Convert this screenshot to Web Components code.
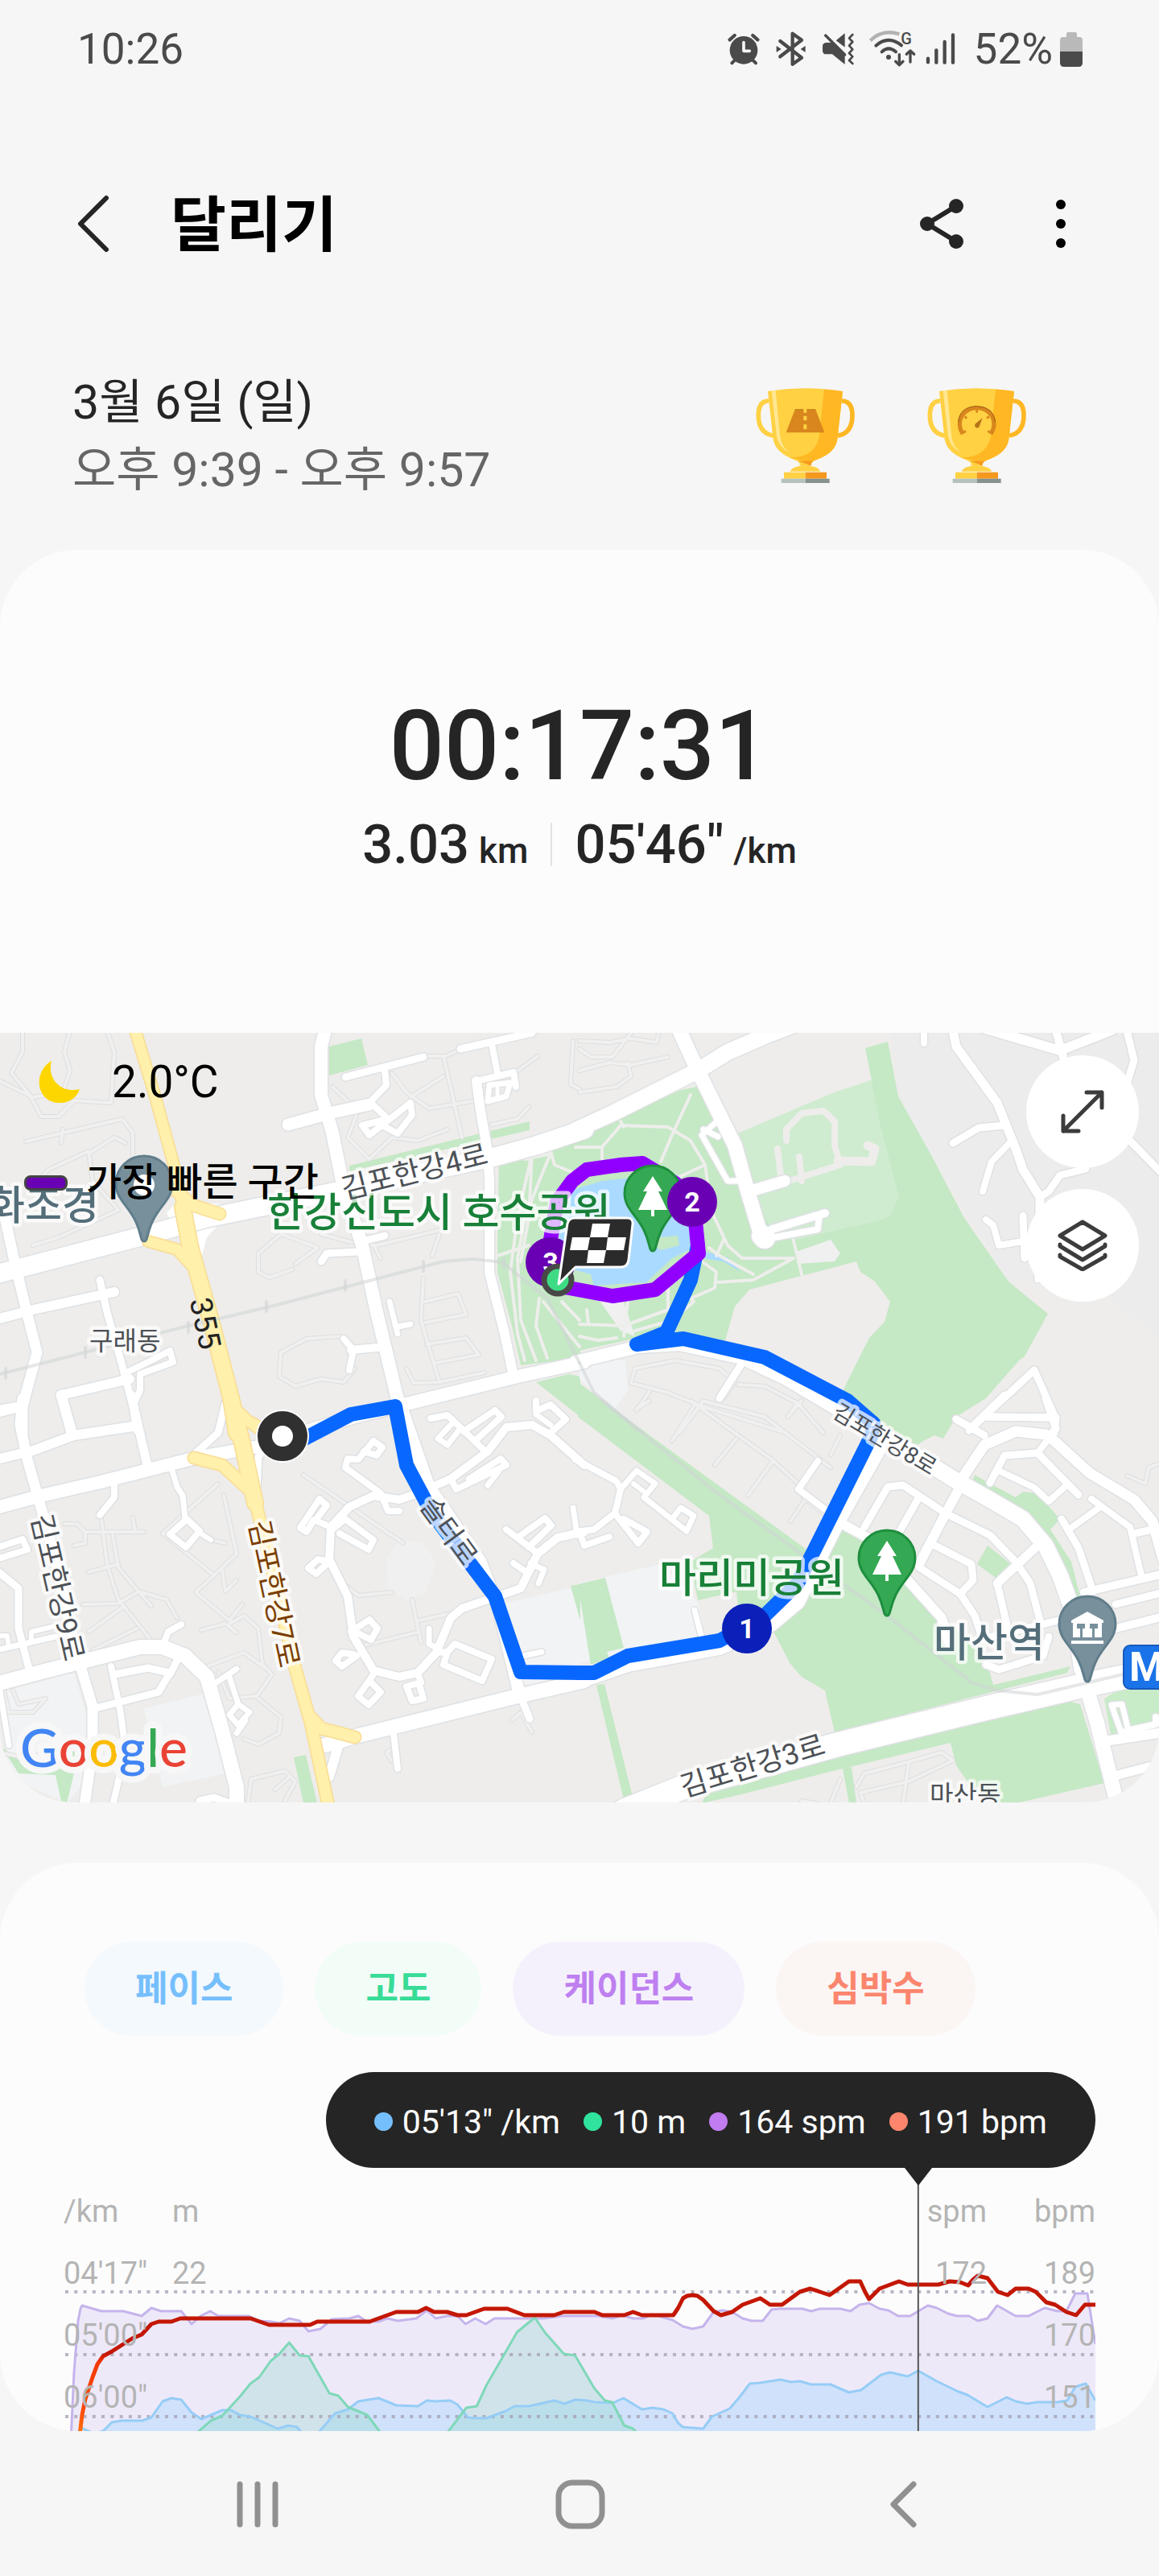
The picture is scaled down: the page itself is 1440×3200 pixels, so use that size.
<!DOCTYPE html>
<html lang="ko">
<head>
<meta charset="utf-8">
<meta name="viewport" content="width=device-width, initial-scale=1">
<title>달리기</title>
<style>
  body { margin: 0; background: #f6f6f6; color: #252525; font-family: Roboto, "Noto Sans CJK KR", sans-serif; }
</style>
</head>
<body>
<run-screen></run-screen>

<script>
const BASE = `<style>
  *, *::before, *::after { box-sizing: border-box; }
  :host { display: block; }
  svg { display: block; }
  p, h1, ul { margin: 0; padding: 0; }
  button { font: inherit; color: inherit; background: none; border: 0; padding: 0; margin: 0; display: grid; place-items: center; cursor: pointer; }
</style>`;

function component(name, render) {
  customElements.define(name, class extends HTMLElement {
    constructor() {
      super();
      const t = document.createElement('template');
      t.innerHTML = BASE + render(this);
      this.attachShadow({ mode: 'open' }).append(t.content.cloneNode(true));
    }
  });
}

/* Turns "x,y x,y" in sheet units into rounded pixel points. */
function project(sheet, pts) {
  return pts.trim().split(/\s+/).map(p => {
    const [x, y] = p.split(',').map(Number);
    return Math.round(sheet.x + x * sheet.sx) + ',' + Math.round(sheet.y + y / 3);
  }).join(' ');
}

/* ---------- status bar ---------- */
component('status-bar', () => `<style>
  :host { height: 122px; padding: 0 95px 0 96px; display: flex; align-items: center; justify-content: space-between; color: #4a4a4a; font-size: 53px; line-height: 60px; }
  .right { display: flex; align-items: center; }
  .right span { margin: 0 9px 0 22px; }
</style>
<span>10:26</span>
<div class="right">
  <svg width="284" height="48" viewBox="78 50 852 144" fill="none" stroke="#4a4a4a" stroke-width="9" stroke-linecap="round" stroke-linejoin="round">
    <circle cx="138" cy="126" r="52" fill="#4a4a4a" stroke="none"/>
    <path d="M86 87l18-16M190 87l-18-16" stroke-width="13"/><path d="M94 174l12-12M183 174l-12-12" stroke-width="12"/>
    <path d="M138 97v32h22" stroke="#f6f6f6" stroke-width="11"/>
    <path d="M274 92l80 62-34 24V64l34 24-80 62" stroke-width="13"/>
    <path d="M260 110v24l18-12zM368 110v24l-18-12z" fill="#4a4a4a" stroke="none"/>
    <path d="M482 90l33-27v52zM447 98h22l46 46v35l-47-38h-22q-14 0-14-14v-15q0-14 15-14z" fill="#4a4a4a" stroke="none"/>
    <path d="M443 71l72 72" stroke-width="10"/>
    <path d="M544 68l-13 13 13 14-13 14 13 14-13 14 13 13-13 14 13 12" stroke-width="8"/>
    <path d="M610 90q46-44 108-24" stroke="#b2b2b2" stroke-width="13" stroke-linecap="butt"/>
    <path d="M631 109q46-40 95-1M653 132q25-24 52 0" stroke-width="12"/>
    <circle cx="678" cy="152" r="9" fill="#4a4a4a" stroke="none"/>
    <path d="M718 142v38M704 168l14 13 14-13M759 170v-41M745 141l14-13 14 13" stroke-width="10"/>
    <text x="724" y="105" font-family="Roboto" font-size="60" font-weight="500" fill="#4a4a4a" stroke="none">G</text>
    <path d="M825 157v14M856 126v46M887 95v77M918 69v103" stroke-width="13"/>
  </svg>
  <span>52%</span>
  <svg width="28" height="43" viewBox="0 0 28 43"><path d="M8 6V2q0-2 2-2h9q2 0 2 2v4h3q4 0 4 4v14H0V10q0-4 4-4z" fill="#b9b9b9"/><path d="M0 24h28v14q0 5-5 5H5q-5 0-5-5z" fill="#4a4a4a"/></svg>
</div>`);

/* ---------- title bar ---------- */
component('title-bar', () => `<style>
  :host { height: 316px; padding: 0 84px 0 76px; display: flex; align-items: center; }
  h1 { flex: 1; margin-left: 56px; font-size: 75px; line-height: 96px; font-weight: 700; color: #000; }
  button { height: 96px; padding-bottom: 4px; }
  .back { width: 80px; }
  .share { width: 96px; }
  .more { width: 76px; margin-left: 62px; }
</style>
<button class="back" aria-label="뒤로"><svg width="44" height="72" viewBox="0 0 44 72" fill="none" stroke="#252525" stroke-width="6" stroke-linecap="round" stroke-linejoin="round"><path d="M38 4L6 36l32 32"/></svg></button>
<h1><slot></slot></h1>
<button class="share" aria-label="공유"><svg width="56" height="64" viewBox="0 0 56 64" fill="#252525"><path d="M46 10L10 32l36 22" fill="none" stroke="#252525" stroke-width="6"/><circle cx="46" cy="10" r="9"/><circle cx="10" cy="32" r="9"/><circle cx="46" cy="54" r="9"/></svg></button>
<button class="more" aria-label="더보기"><svg width="12" height="60" viewBox="0 0 12 60"><circle cx="6" cy="6" r="6"/><circle cx="6" cy="30" r="6"/><circle cx="6" cy="54" r="6"/></svg></button>`);

/* ---------- date and awards ---------- */
const trophy = badge => `<svg width="124" height="120" viewBox="117 62 372 360">
  <path d="M166 110q-39 0-39 54 0 66 56 76" fill="none" stroke="#ffd143" stroke-width="17"/>
  <path d="M437 110q40 0 40 54 0 66-54 76" fill="none" stroke="#ffb723" stroke-width="17"/>
  <path d="M162 74q139-22 279 0l-20 180q-8 50-75 74-30 12-20 23H279q9-12-21-23-66-24-76-74z" fill="#ffd143"/>
  <path d="M372 67q40 2 69 8l-20 179q-8 50-75 74-22 8-22 15-15-8-82-22 98 0 112-80z" fill="#ffb723"/>
  <path d="M274 334h56q-8 9-8 18-20-10-48-18z" fill="#f59a1c"/>
  <path d="M176 72l15-2 17 175q5 34 34 58-37-18-47-60z" fill="#ffe791"/>
  <path d="M245 373q6-15 35-20 20-8 43 0 30 5 34 20z" fill="#ffd143"/>
  <path d="M222 376h80v24h-80z" fill="#ffd143"/><path d="M302 376h79v24h-79z" fill="#f5991e"/>
  <path d="M212 400h90v16h-90z" fill="#b6c1bf"/><path d="M302 400h90v16h-90z" fill="#869190"/>
  ${badge}</svg>`;
const road = `<path d="M263 142h77l33 86H230z" fill="#d8861d"/><path d="M263 142h77" stroke="#a9620f" stroke-width="2"/><path d="M301 140v14M301 166v17M301 198v18" stroke="#ffd143" stroke-width="12"/>`;
const gauge = `<path d="M250 233q-22-32-4-67 20-30 56-30t56 30q18 35-4 67" fill="none" stroke="#d8861d" stroke-width="15"/><path d="M233 190q4-58 69-60 64 2 69 60" fill="none" stroke="#9c5d14" stroke-width="3"/><path d="M302 136v18M256 168l9 7M348 168l-9 7M250 230l11-8M354 230l-11-8" stroke="#d8861d" stroke-width="8"/><path d="M323 174l-12 32q-6 8-14 2-6-8 1-14z" fill="#b8721a"/>`;
component('session-meta', () => `<style>
  :host { display: flex; align-items: center; justify-content: space-between; padding: 20px 164px 57px 90px; font-size: 59px; line-height: 84px; }
  .when p + p { color: #666; }
  .awards { display: flex; gap: 89px; }
</style>
<div class="when"><p>3월 6일 (일)</p><p>오후 9:39 - 오후 9:57</p></div>
<div class="awards">${trophy(road)}${trophy(gauge)}</div>`);

/* ---------- totals ---------- */
component('run-summary', () => `<style>
  :host { background: #fcfcfc; border-radius: 96px 96px 0 0; padding: 174px 0 194px; text-align: center; font-weight: 500; }
  .time { font-size: 120px; line-height: 140px; }
  .row { display: flex; justify-content: center; align-items: baseline; margin-top: 12px; font-size: 67px; line-height: 80px; }
  .row small { font-size: 44px; line-height: 48px; margin-left: 12px; }
  .row i { align-self: center; width: 2px; height: 54px; background: #e2e2e2; margin: 0 28px; }
</style>
<p class="time">00:17:31</p>
<div class="row"><span>3.03</span><small>km</small><i></i><span>05'46"</span><small>/km</small></div>`);

/* ---------- map ---------- */
const U = 720 / 1568;
const SHEET = {
  nw: { x: 0, y: -3, sx: U }, ne: { x: 720, y: -3, sx: U },
  sw: { x: 0, y: 457, sx: U }, se: { x: 720, y: 457, sx: U }
};
const AREAS = [
  ['ne', '#ececec', '840,0 1568,0 1568,1150 1400,950 1240,930 1160,935 950,460 862,245'],
  ['nw', '#c5e8c5', '890,60 978,30 996,130 890,168'],
  ['nw', '#c5e8c5', '945,505 1433,340 1433,372 945,525'],
  ['nw', '#c5e8c5', '1350,480 1568,405 1570,1222 1410,1248 1385,1100 1345,900 1345,800'],
  ['nw', '#c5e8c5', '1450,1310 1540,1280 1570,1290 1570,1440'],
  ['ne', '#c5e8c5', '-5,395 275,222 350,200 430,385 690,232 790,185 773,65 835,42 862,245 950,460 1040,700 1160,935 1267,1055 1205,1215 1190,1230 1100,1370 1020,1440 985,1520 960,1510 930,1530 900,1560 700,1380 785,1145 825,1085 840,1010 800,935 760,900 750,862 460,965 420,1030 395,1155 160,1145 -5,1195'],
  ['ne', '#cfebd0', '430,385 690,232 790,185 810,330 865,620 840,690 820,705 590,780 520,745 460,590'],
  ['ne', '#c5e8c5', '-5,1310 180,1500 60,1500 -5,1440'],
  ['ne', '#f1f3f5', '0,1215 125,1230 130,1340 95,1410 0,1300'],
  ['sw', '#f1f3f5', '20,1080 200,1015 240,1200 240,1400 180,1500 20,1400'],
  ['sw', '#f1f3f5', '390,1145 570,1085 620,1385 440,1440'],
  ['sw', '#f1f3f5', '1350,760 1550,695 1570,830 1570,1050 1400,1060'],
  ['se', '#f1f3f5', '-5,680 220,610 320,750 340,870 -5,980'],
  ['sw', '#c5e8c5', '1545,690 1570,685 1570,820'],
  ['sw', '#c5e8c5', '795,1330 828,1320 858,1500 822,1500'],
  ['sw', '#c5e8c5', '5,1290 60,1350 215,1300 180,1500 165,1490 150,1395 50,1390'],
  ['se', '#c5e8c5', '-5,60 -5,-60 60,0 620,560 705,470 770,510 980,800 1100,960 1120,1060 1328,990 1320,1015 690,1235 665,1080 600,1030 570,980 520,850 560,780 430,770 425,710 320,745 300,600 362,550 350,430'],
  ['se', '#c5e8c5', '-5,685 70,660 120,920 75,935 80,960 30,985'],
  ['se', '#c5e8c5', '45,1060 68,1055 148,1500 122,1500'],
  ['se', '#c5e8c5', '350,1450 1320,1120 1355,1130 1420,1425 1180,1500 1140,1500 1060,1440 1020,1360 1005,1275 712,1370 430,1470 330,1500'],
  ['se', '#c5e8c5', '712,1370 735,1365 750,1500 730,1500'],
  ['se', '#c8ebc8', '1420,1110 1480,1060 1570,1050 1570,1240 1440,1260'],
  ['se', '#c5e8c5', '1070,275 1110,310 1180,360 1200,340 1240,345 1300,440 1275,480 1330,600 1355,730 1330,740 1300,600 1240,470 1150,380 1060,310'],
  ['se', '#c5e8c5', '1105,540 1165,605 1125,660 1075,610'],
  ['ne', '#f0f0f0', '50,1000 120,1010 150,1140 110,1120'],
  ['ne', '#f0f0f0', '585,825 680,780 705,830 690,860 590,870'],
  ['ne', '#aadaff', '-60,640 -10,590 60,560 160,545 290,600 310,810 250,850 180,940 40,950 30,910 -50,880'],
  ['ne', '#aadaff', '340,825 400,845 435,900 390,862 330,850'],
  ['ne', '#c5e8c5', '215,770 265,765 270,800 220,820 200,800'],
  ['nw', '#ffffff', '450,680 480,640 640,650 560,770 540,870 500,800'],
  ['sw', '#f0f0f0', '1045,590 1080,520 1140,525 1180,600 1150,720 1100,745 1050,700']
];
/* Footpaths and service lanes. */
const LANES = [
  ['nw', '60,0 60,80 30,160 80,240 110,320 160,320 200,260 300,270 310,80 290,0'],
  ['nw', '190,0 175,80 190,150 170,230 90,250 0,190'],
  ['nw', '70,415 330,330 360,380 360,480'], ['nw', '170,370 165,420'],
  ['nw', '90,800 160,770 320,670 250,560 240,450 130,520 80,600'], ['nw', '240,460 310,400 340,420'],
  ['nw', '1150,95 1200,95 1250,400'], ['nw', '900,210 970,300 940,400 1000,480 1060,400 1130,410 1210,370'],
  ['nw', '1060,160 1100,230 1160,290 1290,260'], ['nw', '1200,170 1110,250'], ['nw', '1200,100 1250,70'],
  ['nw', '1330,350 1400,330 1430,285'], ['nw', '1380,170 1455,95'],
  ['nw', '760,760 700,830 700,900 730,920 790,890'], ['nw', '760,760 860,810 800,870'],
  ['nw', '870,760 950,790 1020,800 1200,740'], ['nw', '1190,760 1170,840'], ['nw', '1010,800 1030,850'],
  ['nw', '1145,925 1140,1080 1190,1310 1310,1275'], ['nw', '1150,1010 1240,980 1260,1060 1150,1090'],
  ['nw', '1155,1170 1260,1145 1295,1210 1180,1240'], ['nw', '1100,1260 1120,1315 1190,1310'],
  ['nw', '920,1140 830,1150 760,1200 755,1290 800,1325 870,1300 930,1310 960,1260'],
  ['nw', '1550,40 1545,200 1568,220'],
  ['ne', '0,40 80,45 140,30 210,45 215,0'], ['ne', '0,150 80,120 140,130 240,100'], ['ne', '0,70 30,100 90,100 140,10'],
  ['ne', '0,230 100,210 140,170 130,120'],
  ['ne', '140,1310 150,1260 260,1230 380,1260 420,1310 390,1370'], ['ne', '140,1315 240,1350 330,1400 560,1500'],
  ['ne', '190,1345 155,1415'], ['ne', '330,1390 270,1500'], ['ne', '430,1320 500,1325 590,1390 660,1500'], ['ne', '590,1390 565,1440'],
  ['se', '300,0 430,130 520,220 600,320'], ['se', '330,0 500,60 680,250'], ['se', '310,20 250,150'], ['se', '425,140 365,240'], ['se', '520,230 455,355'],
  ['se', '610,370 570,450'], ['se', '605,360 660,420'], ['se', '705,130 680,200'], ['se', '155,30 190,0'], ['se', '565,60 600,0'],
  ['se', '750,1440 770,1390 880,1350 980,1310 1010,1340 890,1420 760,1460 770,1500'], ['se', '890,1350 875,1500'],
  ['se', '680,1500 705,1410'], ['se', '600,1490 640,1500'], ['se', '1480,280 1530,310 1540,250 1568,235'],
  ['sw', '175,460 210,460 230,490 390,490'], ['sw', '360,435 365,485'], ['sw', '275,440 290,610 320,740 410,895'],
  ['sw', '305,500 320,620 375,710 450,740 480,810'], ['sw', '240,640 320,610'], ['sw', '225,760 320,755 375,710 410,765'],
  ['sw', '240,860 330,770'], ['sw', '250,930 370,850'], ['sw', '200,540 230,530 230,490'],
  ['sw', '590,310 440,495 580,650 640,570 605,350'], ['sw', '580,650 530,715 620,820 655,760'], ['sw', '545,855 610,830 640,865'],
  ['sw', '600,630 610,710 640,670'], ['sw', '620,830 660,800 700,850 710,980 735,1020 695,1100 620,1110 590,1010'],
  ['sw', '560,990 660,940 720,1000'], ['sw', '700,1110 760,1180 755,1240 700,1280 660,1260'],
  ['sw', '570,520 610,530'], ['sw', '820,275 1090,530'], ['sw', '930,680 970,725 1060,715'], ['sw', '1115,740 1140,900'], ['sw', '975,915 1135,860'], ['sw', '1135,820 1230,790'],
  ['sw', '670,1500 680,1410 770,1380 800,1420 770,1490'], ['sw', '785,1400 745,1450'], ['sw', '1385,1190 1410,1160 1440,1235'], ['sw', '1060,1300 1045,1310 1060,1345'],
  ['sw', '10,1080 25,1160 90,1160 125,1110 50,1130 35,1080'], ['sw', '0,1310 60,1330 200,1300']
];
const PARK_PATHS = [
  ['ne', '300,240 250,390 220,490'], ['ne', '-10,435 60,435 110,355 240,360 300,410 340,500 360,680 400,800 440,850 580,850 470,930 370,940'],
  ['ne', '340,500 270,545'], ['ne', '110,340 120,360'], ['ne', '60,435 60,490'], ['ne', '330,860 370,900 365,960 300,1000 310,1010 250,1080 150,1120'],
  ['ne', '575,760 600,910'], ['ne', '350,810 380,840 470,910'], ['ne', '390,780 370,840'], ['ne', '0,1095 120,1100 240,1040 240,960'], ['ne', '20,1040 25,1090'], ['ne', '130,1010 120,1140'], ['ne', '0,1140 50,1155 100,1145'],
  ['nw', '1370,490 1440,460 1400,700 1380,900 1400,1130 1420,1230'], ['nw', '1420,480 1490,460 1460,560 1420,700 1400,850 1410,1080 1450,1230'],
  ['nw', '1490,450 1500,500 1568,540'], ['nw', '1440,460 1430,700 1410,860'], ['nw', '1345,840 1430,800'], ['nw', '1460,1000 1450,1100 1480,1220'], ['nw', '1470,1010 1568,1180'], ['nw', '1520,1010 1568,1080']
];
/* Streets: sheet, width, points. */
const STREETS = [
  ['nw', 23, '-10,910 390,765 560,700 700,660 910,600 1340,470 1450,430 1580,370'], ['ne', 20, '-10,372 90,310 320,150 400,80 500,20 580,-20'],
  ['nw', 12, '-10,1078 90,1040 310,975'], ['nw', 13, '10,680 40,860 75,1060 100,1200 60,1400 60,1500'],
  ['nw', 9, '270,930 290,1050 330,1250 360,1400 370,1490'], ['nw', 12, '-10,1425 60,1400'], ['nw', 12, '350,1300 165,1360 195,1510'],
  ['nw', 8, '350,1270 410,1230 460,1195 468,1235 380,1280 380,1340 360,1400'],
  ['nw', 16, '880,0 870,60 870,240 900,380 930,590 980,800 1020,1050 1080,1400'],
  ['nw', 12, '1290,190 1300,300 1320,450 1325,560 1325,900 1365,1130 1390,1290'], ['nw', 8, '1330,50 1345,160'], ['nw', 9, '1245,68 1440,8'], ['nw', 9, '935,175 1145,100'],
  ['nw', 8, '1040,150 1045,205 1000,270'], ['nw', 15, '780,350 900,305 1000,275'], ['nw', 8, '1010,280 1050,330 980,355 1000,390 1110,270 1115,315 1075,385 1030,350'],
  ['nw', 8, '1290,190 1390,155 1397,210'], ['nw', 7, '1325,205 1320,265 1370,245 1380,195 1325,205'], ['nw', 5, '1345,215 1345,250'],
  ['nw', 9, '870,860 885,830 970,825'], ['nw', 9, '980,785 1040,765'], ['nw', 7, '1055,1010 1075,1130'], ['nw', 7, '1075,1105 1110,1095'],
  ['nw', 8, '930,1150 955,1190 945,1265'], ['nw', 10, '950,1190 1040,1180'], ['nw', 16, '1090,1395 1400,1290 1580,1236'],
  ['ne', 16, '-10,1236 160,1180 270,1170 440,1220 560,1300 720,1430'],
  ['ne', 18, '270,0 320,150 420,430 455,600 490,760'], ['ne', 26, '495,765 500,775'], ['ne', 14, '460,600 555,562'], ['ne', 10, '520,740 665,680'], ['ne', 8, '530,770 645,740 650,690'],
  ['ne', 7, '375,335 330,390 400,562 440,562'], ['ne', 7, '335,370 375,395'], ['ne', 9, '380,1370 445,1230'],
  ['ne', 11, '1010,0 1020,60 1130,270 1180,440 1200,520 1245,620 1245,690'], ['ne', 12, '1090,-10 1300,75 1440,0'], ['ne', 10, '1290,0 1310,110'], ['ne', 9, '1480,0 1500,110 1480,200'],
  ['ne', 9, '1480,400 1580,540'], ['ne', 9, '1150,355 1080,362 1010,420'], ['ne', 8, '1170,410 1115,490 1090,600'], ['ne', 9, '1245,620 1270,600 1300,540 1370,515'],
  ['ne', 8, '932,0 932,48'], ['ne', 8, '1100,705 1120,725 1135,800 1200,785'], ['ne', 9, '1200,690 1205,850'], ['ne', 7, '1240,930 1240,900'],
  ['ne', 9, '1020,1450 1095,1510'], ['ne', 9, '1055,1490 1230,1265 1290,1450 1285,1500'], ['ne', 9, '1100,1440 1290,1442'],
  ['sw', 13, '60,-10 55,90 75,220 110,400 150,600 200,900 220,1000 250,1140 250,1300 228,1510'],
  ['sw', 11, '355,-20 375,100 398,240'], ['sw', 13, '-10,40 60,20'], ['sw', 13, '165,-20 195,130'], ['sw', 12, '-10,218 90,185 200,130 360,95'],
  ['sw', 16, '-10,398 110,355 280,300 520,215 700,170 850,105 960,60 1090,15'],
  ['sw', 18, '-10,1055 110,1010 230,970 380,917 440,917 500,950 560,1030 600,1230 640,1440 640,1510'],
  ['sw', 8, '300,990 325,1150 340,1300 305,1510'], ['sw', 9, '310,1020 400,995 460,1015 430,1085 260,1145'], ['sw', 9, '460,1020 485,950'], ['sw', 8, '445,900 455,860 490,835'],
  ['sw', 8, '270,425 310,360 310,300'], ['sw', 7, '465,260 480,320 495,355 500,440'], ['sw', 8, '505,440 460,497 503,545 540,485 505,440'], ['sw', 6, '535,490 570,520'],
  ['sw', 8, '-10,550 60,515 75,555 -10,590'], ['sw', 9, '-10,630 50,700 50,850 80,1010'], ['sw', 7, '-10,930 150,880'], ['sw', 6, '85,890 85,860 150,840'], ['sw', 6, '-10,875 20,875 25,920'],
  ['sw', 9, '530,195 590,120 610,10'], ['sw', 9, '695,330 700,210 730,150'], ['sw', 7, '585,1050 640,1000'], ['sw', 7, '620,1030 645,1130 620,1170 645,1210 675,1160 645,1130'], ['sw', 7, '640,1240 665,1190'],
  ['sw', 9, '540,1490 580,1478 620,1500'], ['sw', 7, '0,1080 25,1285'],
  ['sw', 18, '880,1285 960,1250 1400,1100 1580,1045'], ['se', 18, '-10,1050 130,985 380,920 520,830 590,750 700,450 810,180'], ['sw', 12, '890,1400 915,1290'], ['sw', 8, '1065,1240 1075,1370'],
  ['sw', 15, '1080,0 1160,320 1300,600 1350,780 1405,1090'], ['sw', 9, '1405,1090 1432,1185'],
  ['sw', 10, '1130,345 1080,368 1010,355 945,395 895,470 890,590 940,730 955,880 1010,1005 1080,1030 1130,1015 1180,940 1220,810 1250,775 1410,700 1455,570 1510,510 1580,490'],
  ['sw', 10, '1130,345 1220,290 1320,190 1370,100 1440,90 1490,130 1580,240'],
  ['sw', 8, '1010,150 970,220 940,215 935,250 1030,345 1050,410 1080,410'], ['sw', 8, '1010,150 1035,175 1020,205 985,190'],
  ['sw', 8, '895,470 850,445 830,490 812,475 865,367 885,390 855,440'], ['sw', 8, '900,480 935,440 1010,520 998,555 920,495'], ['sw', 8, '890,600 855,645 835,625 860,590 890,600'],
  ['sw', 8, '950,860 1000,815 1022,850 1005,890 965,865'], ['sw', 8, '955,945 925,940 908,970 925,990 965,950'], ['sw', 8, '1010,1020 970,1100 998,1135 1030,1085 1005,1050'],
  ['sw', 8, '1130,1015 1140,1050 1100,1065 1115,1120 1145,1110 1135,1060'], ['sw', 7, '1180,920 1160,905 1160,850'], ['sw', 8, '1180,940 1210,935 1230,905 1330,962 1305,1045 1200,985 1210,935'],
  ['sw', 8, '1165,65 1210,55 1310,185'], ['sw', 8, '1255,115 1340,35 1357,60 1285,150'], ['sw', 7, '1225,80 1185,140 1210,165 1240,115'], ['sw', 8, '1220,290 1235,330 1370,240 1355,215 1270,290'], ['sw', 7, '1320,315 1350,260'],
  ['sw', 8, '1490,120 1530,70 1490,15 1450,40 1450,0'], ['sw', 7, '1450,50 1490,90'], ['sw', 8, '1370,480 1450,565'], ['sw', 8, '1400,510 1475,437 1492,465 1430,545'], ['sw', 8, '1390,605 1430,645'], ['sw', 7, '1435,605 1472,630 1458,680'], ['sw', 7, '1550,400 1562,500'], ['sw', 7, '1415,950 1465,937'],
  ['se', 20, '650,-30 760,75 1010,290 1100,360 1200,440 1260,540 1300,650 1340,800 1360,1000'],
  ['se', 30, '120,1530 280,1440 700,1280 1100,1145 1370,1060 1580,1000'], ['se', 18, '1370,1060 1400,1200 1450,1480'],
  ['se', 13, '1030,300 1095,165 1180,115 1260,125 1285,150 1380,270 1500,370 1550,450 1580,600'], ['se', 9, '1270,130 1290,105 1260,-10'], ['se', 9, '1105,60 1290,62'], ['se', 9, '1020,70 1095,130'], ['se', 9, '1060,100 1150,-20'],
  ['se', 9, '1110,305 1150,205 1240,195 1350,350'], ['se', 8, '1240,195 1270,140'], ['se', 8, '1135,260 1230,325 1270,375 1310,325'],
  ['se', 12, '1035,310 990,420 920,610'], ['se', 9, '770,470 835,320 875,315 990,420 1110,500 1180,600 1220,680 1245,820'], ['se', 9, '915,370 860,500'],
  ['se', 9, '950,530 1060,610 1065,670 1030,720 1070,800 1090,890'], ['se', 9, '920,620 1030,720'], ['se', 11, '1130,680 1240,540'], ['se', 9, '1130,680 1160,860'], ['se', 12, '700,450 790,520 980,810 1000,900'],
  ['se', 8, '645,225 593,330 700,440'], ['se', 8, '1385,365 1490,470 1520,650'], ['se', 8, '1410,395 1325,480'], ['se', 9, '1305,440 1350,550 1390,710'], ['se', 10, '1365,715 1580,645'], ['se', 9, '1500,495 1550,480'],
  ['se', 9, '1450,760 1580,715'], ['se', 10, '1450,850 1580,805'], ['se', 9, '1080,890 1340,805'], ['se', 9, '1100,985 1135,1002 1255,950 1270,880'],
  ['se', 12, '1420,1270 1580,1235'], ['se', 11, '1440,1400 1580,1350'], ['se', 7, '1440,1135 1465,1235 1485,1230 1468,1130 1440,1135'], ['se', 8, '1480,1230 1560,1205 1560,1180'],
  ['se', 8, '-10,220 100,300 110,330 95,420 40,480 -10,490'], ['se', 8, '0,490 12,540 80,508'], ['se', 7, '110,330 155,260 205,310 175,360 290,485 310,430 275,400 250,440'], ['se', 6, '145,310 175,340'], ['se', 8, '95,420 160,530 182,490 120,440'], ['se', 7, '312,780 330,885']
];
const HIGHWAY = [
  ['nw', 13, '366,0 420,250 470,500 500,690'], ['nw', 19, '495,660 515,800 530,880 570,1080 625,1370 640,1500'], ['nw', 14, '480,600 520,650 595,685'], ['nw', 13, '400,785 480,815 530,890'],
  ['nw', 13, '630,1400 670,1455 720,1490'], ['sw', 19, '625,-10 655,160 690,380'], ['sw', 14, '685,350 750,700 800,1000 840,1200 888,1510'], ['sw', 14, '525,212 600,240 680,340'], ['sw', 14, '835,1170 870,1220 960,1255'], ['sw', 12, '655,60 700,105']
];
const poly = (tag, [s, v, pts], attrs) => `<${tag} points="${project(SHEET[s], pts)}" ${attrs(v)}/>`;
const street = (list, extra, colour) => list.map(r => poly('polyline', r, w => `stroke-width="${w + extra}" stroke="${colour}"`)).join('');
const lane = (list, w, colour) => list.map(([s, p]) => poly('polyline', [s, w, p], () => `stroke-width="${w}" stroke="${colour}"`)).join('');

const pin = (x, y, fill, edge, glyph) => `<g transform="translate(${x} ${y})"><path d="M0 107c-5 0-3-10-11-26C-21 61-35 54-35 35a35 34 0 0 1 70 0c0 19-14 26-24 46C3 97 5 107 0 107z" fill="${fill}" stroke="${edge}" stroke-width="3"/>${glyph}</g>`;
const TREE = '<path d="M0 14l12 19H7l11 23H2v8h-4v-8h-16l11-23h-5z" fill="#fff"/>';
const STATION = '<path d="M0 20l20 11v3h-2v18h-36V34h-2v-3zM-20 56h40v4h-40z" fill="#fff"/><path d="M-13 35h10v6h-3v11h-3V41h-4zM3 35h10v6H9v11H6V41H3z" fill="#78909c"/>';
const label = (x, y, a, size, colour, text) => `<text x="${x}" y="${y}" font-size="${size}" fill="${colour}" text-anchor="middle" dominant-baseline="central" transform="rotate(${a} ${x} ${y})">${text}</text>`;
const stop = (x, y, fill, n) => `<circle cx="${x}" cy="${y}" r="31" fill="${fill}"/><text x="${x}" y="${y + 12}" font-size="34" font-weight="700" fill="#fff" text-anchor="middle">${n}</text>`;

component('route-map', () => `<style>
  :host { position: relative; height: 956px; overflow: hidden; border-radius: 0 0 92px 92px; background: #eeedeb; color: #000; }
  .map { width: 100%; height: 100%; }
  .streets, .route { fill: none; stroke-linecap: round; stroke-linejoin: round; }
  .labels { paint-order: stroke; stroke: rgba(255,255,255,.72); stroke-width: 9px; stroke-linejoin: round; }
  .places { font-size: 50px; font-weight: 500; }
  .legend { position: absolute; left: 0; top: 29px; }
  .legend p { display: flex; align-items: center; }
  .weather { padding-left: 48px; gap: 40px; font-size: 55px; line-height: 64px; }
  .fastest { padding-left: 30px; margin-top: 58px; gap: 23px; font-size: 48px; line-height: 70px; font-weight: 500; }
  .fastest i { width: 54px; height: 19px; border-radius: 8px; border: 3px solid #444; background: #6a00b4; }
  .tools { position: absolute; right: 25px; top: 28px; display: grid; gap: 26px; }
  .tools button { width: 140px; height: 140px; border-radius: 50%; background: #fff; }
</style>
<svg class="map" viewBox="0 0 1440 956" preserveAspectRatio="xMidYMid slice" role="img" aria-label="달린 경로">
  ${AREAS.map(a => poly('polygon', a, c => `fill="${c}"`)).join('')}
  <g class="streets">
    ${lane(LANES, 6, '#dedede')}${lane(LANES, 4, '#f0f0f0')}
    ${lane(PARK_PATHS, 4, '#eeeeec')}
    <polyline points="${project(SHEET.ne, '560,410 560,370 600,310 660,300 690,340 690,430 705,500 560,565 545,540 535,440')}" stroke="#eeedeb" stroke-width="8"/>
    <polyline points="${project(SHEET.ne, '600,560 595,470')}" stroke="#eeedeb" stroke-width="8"/>
    <polyline points="${project(SHEET.ne, '700,485 790,490 800,440 780,430')}" stroke="#eeedeb" stroke-width="11"/>
    ${street(STREETS, 3, '#dfe1e4')}${street(STREETS, 0, '#fff')}
    ${street(HIGHWAY, 3, '#f9dc92')}${street(HIGHWAY, 0, '#fff0ac')}
    <g stroke="#cfd4d6" stroke-opacity=".55" stroke-width="4">
      <polyline points="${project(SHEET.nw, '0,1280 500,1105 740,1025 940,955 1200,862 1280,852 1360,865 1480,1000 1568,1240')}"/>
      <polyline points="${project(SHEET.ne, '0,1240 40,1350 170,1500')}"/>
      <polyline points="${project(SHEET.se, '60,0 380,350 850,820 1060,1050 1130,1080 1240,1095 1470,1020 1568,1000')}"/>
      <path d="M7 417v12M106 391v12M234 360v12M331 334v12M429 308v12M526 284v12M626 280v12"/>
    </g>
  </g>
  <g class="route" stroke-width="18">
    <g stroke="#0867ff">
      <polyline points="${project(SHEET.sw, '800,160 950,50 1070,20 1100,240 1170,420 1340,730 1410,1010 1575,1015')}"/>
      <polyline points="${project(SHEET.se, '-5,1015 40,1015 130,950 380,895 500,800 590,680 790,130 795,85')}"/>
      <polyline points="${project(SHEET.ne, '795,1465 725,1380 500,1218 280,1150 155,1170 235,1125 300,930 320,800')}"/>
    </g>
    <polygon stroke="#9100ff" points="${project(SHEET.ne, '-53,955 -78,780 -60,640 -20,560 20,520 110,500 170,496 260,570 310,650 323,830 205,965 90,990')}"/>
  </g>
  <g class="labels">
    <g class="places">
      <text x="123" y="232" fill="#546e7a" text-anchor="end">화조경</text>
      <text x="332" y="241" fill="#188038">한강신도시 호수공원</text>
      <text x="819" y="695" fill="#188038">마리미공원</text>
      <text x="1160" y="775" fill="#546e7a">마산역</text>
    </g>
    <text x="111" y="394" font-size="32" fill="#4c5156">구래동</text>
    <text x="1155" y="958" font-size="32" fill="#4c5156">마산동</text>
    ${label(515, 173, -14, 36, '#4c5156', '김포한강4로')}
    ${label(71, 689, 77, 36, '#4c5156', '김포한강9로')}
    ${label(340, 697, 78, 36, '#7a3e00', '김포한강7로')}
    ${label(558, 619, 54, 34, '#4c5156', '솔터로')}
    ${label(1099, 505, 31, 28, '#4c5156', '김포한강8로')}
    ${label(935, 911, -17, 36, '#4c5156', '김포한강3로')}
  </g>
  ${label(255, 361, 78, 38, '#222', '355')}
  ${pin(179, 152, '#78909c', '#607d8b', '<circle cy="37" r="13" fill="#fff"/>')}
  ${pin(811, 164, '#34a853', '#1e8e3e', TREE)}
  ${pin(1102, 617, '#34a853', '#1e8e3e', TREE)}
  ${pin(1351, 699, '#78909c', '#607d8b', STATION)}
  <rect x="1396" y="761" width="80" height="54" rx="8" fill="#1a73e8" stroke="#185abc" stroke-width="2"/>
  <text x="1403" y="805" font-size="50" font-weight="700" fill="#fff">M</text>
  ${stop(860, 210, '#6a00b4', '2')}
  ${stop(684, 285, '#6a00b4', '3')}
  ${stop(928, 740, '#0b20b8', '1')}
  <circle cx="693" cy="307" r="17" fill="#3ddc84" stroke="#484848" stroke-width="7"/>
  <path d="M694 312l11-75q2-7 9-7h65q8 0 7 8l-5 44q-1 9-10 9h-56l-12 12z" fill="#2b2b2b" stroke="#fff" stroke-width="3" stroke-linejoin="round"/>
  <path d="M736 237h22l-3 17h-22zM711 254h22l-3 16h-22zM755 254h23l-3 16h-22zM731 270h22l-3 16h-21z" fill="#fff"/>
  <circle cx="351" cy="501" r="33" fill="#fff"/><circle cx="351" cy="501" r="22" fill="#fff" stroke="#303030" stroke-width="18"/>
  <text x="25" y="912" font-family="Lato" font-size="66" paint-order="stroke" stroke="#f7f7f7" stroke-width="16" stroke-linejoin="round" font-weight="500"><tspan fill="#4285f4">G</tspan><tspan fill="#ea4335">o</tspan><tspan fill="#fbbc05">o</tspan><tspan fill="#4285f4">g</tspan><tspan fill="#34a853">l</tspan><tspan fill="#ea4335">e</tspan></text>
</svg>
<div class="legend">
  <p class="weather"><svg width="51" height="52" viewBox="0 0 51 52"><path d="M16 0C-6 12-5 49 24 52c14 1 24-7 27-17C28 41 10 22 16 0z" fill="#fdd600"/></svg>2.0°C</p>
  <p class="fastest"><i></i>가장 빠른 구간</p>
</div>
<div class="tools">
  <button aria-label="크게 보기"><svg width="56" height="56" viewBox="0 0 56 56" fill="none" stroke="#3c3c3c" stroke-width="5" stroke-linecap="round" stroke-linejoin="round"><path d="M4 52L52 4M33 4h19v19M4 33v19h19"/></svg></button>
  <button aria-label="지도 종류"><svg width="62" height="64" viewBox="0 0 62 64" fill="none" stroke="#3c3c3c" stroke-width="5" stroke-linecap="round" stroke-linejoin="round"><path d="M31 3l28 17-28 17L3 20zM3 31v2l28 17 28-17v-2M3 44v2l28 16 28-16v-2"/></svg></button>
</div>`);

/* ---------- chart ---------- */
const PLOT = { a: { x: -20, y: -29, sx: 1 / 2.24 }, b: { x: 660, y: -29, sx: 1 / 2.24 } };
const line = (a, b) => project(PLOT.a, a) + (b ? ' ' + project(PLOT.b, b) : '');
const heart = line('88,1060 96,960 105,900 125,820 140,770 155,740 180,722 235,675 262,660 290,622 310,611 345,611 370,599 565,599 615,624 730,624 750,611 895,611 970,575 1030,575 1052,562 1075,575 1110,575 1140,587 1165,587 1215,563 1278,563 1325,587 1410,587 1435,575 1520,575',
  '20,587 80,587 105,575 130,587 218,587 230,560 245,525 255,515 270,513 285,516 300,530 330,572 350,588 380,575 410,548 460,525 485,549 520,549 570,500 597,489 625,500 652,514 705,463 738,463 750,500 762,527 790,490 845,463 870,475 955,475 985,463 1015,465 1037,477 1050,455 1065,440 1090,450 1120,500 1147,514 1170,488 1205,488 1225,500 1255,540 1280,549 1310,575 1337,588 1362,549 1395,549');
const cadence = line('66,1060 75,800 85,610 92,565 97,552 150,572 210,572 263,591 288,562 315,572 372,572 400,620 425,591 452,572 475,591 560,591 590,608 620,611 645,618 672,601 700,608 725,648 760,638 790,603 840,601 865,591 885,608 920,611 945,601 975,610 1025,601 1054,570 1080,601 1110,591 1140,591 1163,620 1190,601 1218,620 1243,601 1380,601 1430,591 1520,591',
  '10,591 50,601 75,588 105,601 135,601 160,585 215,606 245,630 272,639 300,630 330,577 355,570 380,577 410,600 435,610 465,610 490,568 515,563 575,563 600,572 625,563 680,563 710,572 735,548 762,543 790,563 815,570 842,591 875,591 925,552 950,560 980,583 1005,591 1040,591 1065,610 1090,600 1117,552 1170,591 1205,591 1250,562 1285,572 1310,572 1335,506 1368,506 1390,695');
const hills = [line('395,1060 420,1020 455,980 485,962 535,890 565,842 590,820 620,758 645,732 672,690 700,738 725,742 785,878 808,888 835,930 890,960 922,1020 940,1060'),
  line('1095,1060 1115,1020 1165,933 1195,927 1220,850 1305,650 1355,597 1385,655 1435,733 1468,738 1520,860 1550,905 1571,912 1603,1000 1628,1010 1660,1060')];
const pace = line('70,1060 95,1008 130,1030 155,1020 180,988 205,982 265,982 290,970 320,910 345,897 372,902 400,950 427,975 485,943 510,943 535,960 565,965 640,1010 670,1000 695,1005 725,1060 745,1060 757,1020 800,955 835,938 865,908 920,896 970,925 1030,928 1055,905 1080,910 1120,905 1140,920 1170,968 1190,973 1220,973 1275,945 1300,928 1340,928 1410,905 1438,918 1468,904 1500,905 1520,912',
  '50,914 78,898 130,940 160,934 190,940 215,955 230,990 245,1005 300,1010 325,965 375,935 400,895 430,842 460,840 515,827 545,837 570,835 600,846 655,846 705,877 740,868 795,810 820,802 870,815 898,795 950,835 1010,873 1035,885 1090,931 1145,895 1170,910 1200,918 1230,912 1285,912 1312,905 1335,855 1365,843 1390,905');
const closed = (pts, from, to) => `${from},330 ${pts} ${to},330`;

component('metric-chip', el => `<style>
  button { height: 117px; padding: 0 63px; border-radius: 59px; font-size: 44px; line-height: 60px; font-weight: 700; color: ${el.getAttribute('ink')}; background: ${el.getAttribute('tint')}; }
</style><button type="button"><slot></slot></button>`);

component('metric-chart', () => `<style>
  :host { margin-top: 75px; padding: 98px 79px 0; background: #fcfcfc; border-radius: 96px; overflow: hidden; }
  .chips { display: flex; gap: 39px; padding-left: 26px; }
  .tip { position: relative; width: max-content; margin: 45px 0 0 auto; height: 119px; padding: 4px 60px 0; border-radius: 60px; background: #252525; color: #fff; display: flex; align-items: center; gap: 29px; font-size: 41px; line-height: 50px; list-style: none; }
  .tip::after { content: ""; position: absolute; right: 203px; top: 100%; border: 17px solid transparent; border-top: 22px solid #252525; border-bottom: 0; }
  .tip li { display: flex; align-items: center; gap: 12px; white-space: pre; }
  .tip i { width: 23px; height: 23px; border-radius: 50%; background: var(--c); }
  .plot { display: grid; margin-top: 16px; }
  .plot > * { grid-area: 1 / 1; }
  svg { width: 100%; height: 311px; overflow: hidden; }
  .axis { display: grid; grid-template-columns: 135px 1fr 1fr 135px; grid-auto-rows: 77px; font-size: 38px; line-height: 76px; color: #b4b4b4; }
  .axis .r { text-align: right; }
</style>
<div class="chips">
  <metric-chip ink="#76bffd" tint="#f4f9fd">페이스</metric-chip>
  <metric-chip ink="#38dc97" tint="#f2fdf8">고도</metric-chip>
  <metric-chip ink="#be80f0" tint="#f5f1fc">케이던스</metric-chip>
  <metric-chip ink="#fb856d" tint="#fbf5f4">심박수</metric-chip>
</div>
<ul class="tip">
  <li style="--c:#76bffd"><i></i>05'13" /km</li><li style="--c:#30e39c"><i></i>10 m</li><li style="--c:#c07cf0"><i></i>164 spm</li><li style="--c:#ff866c"><i></i>191 bpm</li>
</ul>
<div class="plot">
  <svg viewBox="0 0 1281 311" preserveAspectRatio="none" fill="none" stroke-linejoin="round">
    <defs><linearGradient id="hr" gradientUnits="userSpaceOnUse" x1="0" y1="320" x2="0" y2="215"><stop offset="0" stop-color="#ff7a10"/><stop offset=".35" stop-color="#fb4a0c"/><stop offset=".9" stop-color="#f23a05"/><stop offset="1" stop-color="#c31704"/></linearGradient></defs>
    <polygon points="${closed(cadence, 9, 1281)}" fill="#eee9f9"/>
    <polygon points="${closed(pace, 10, 1281)}" fill="#cfe1fb"/>
    ${hills.map(h => `<polygon points="${h}" fill="#8fd8c8" fill-opacity=".3"/>`).join('')}
    <path d="M2 138h1279M2 216h1279M2 293h1279" stroke="#a39db0" stroke-opacity=".75" stroke-width="4" stroke-dasharray="4 7.26"/>
    <polyline points="${cadence}" stroke="#c5b4ec" stroke-width="3"/>
    <polyline points="${pace}" stroke="#96cdf6" stroke-width="3"/>
    ${hills.map(h => `<polyline points="${h}" stroke="#7fd8b8" stroke-width="3"/>`).join('')}
    <polyline points="${heart}" stroke="url(#hr)" stroke-width="5"/>
    <path d="M1061 0v311" stroke="#555" stroke-width="2"/>
  </svg>
  <div class="axis">
    <span>/km</span><span>m</span><span class="r">spm</span><span class="r">bpm</span>
    <span>04'17"</span><span>22</span><span class="r">172</span><span class="r">189</span>
    <span>05'00"</span><span></span><span></span><span class="r">170</span>
    <span>06'00"</span><span></span><span></span><span class="r">151</span>
  </div>
</div>`);

/* ---------- system navigation ---------- */
component('system-nav', () => `<style>
  :host { height: 180px; padding: 0 117px 0 119px; display: flex; }
  button { flex: 1; padding-top: 2px; }
  svg { fill: none; stroke: #909090; stroke-width: 7px; stroke-linecap: round; stroke-linejoin: round; }
</style>
<button aria-label="최근 앱"><svg width="54" height="58"><path d="M5 4v50M27 4v50M49 4v50"/></svg></button>
<button aria-label="홈"><svg width="62" height="62"><rect x="4" y="4" width="54" height="54" rx="17"/></svg></button>
<button aria-label="뒤로"><svg width="36" height="58"><path d="M31 4L6 29l25 25"/></svg></button>`);

component('run-screen', () => `
<status-bar></status-bar>
<title-bar>달리기</title-bar>
<main>
  <session-meta></session-meta>
  <run-summary></run-summary>
  <route-map></route-map>
  <metric-chart></metric-chart>
</main>
<system-nav></system-nav>`);
</script>
</body>
</html>
